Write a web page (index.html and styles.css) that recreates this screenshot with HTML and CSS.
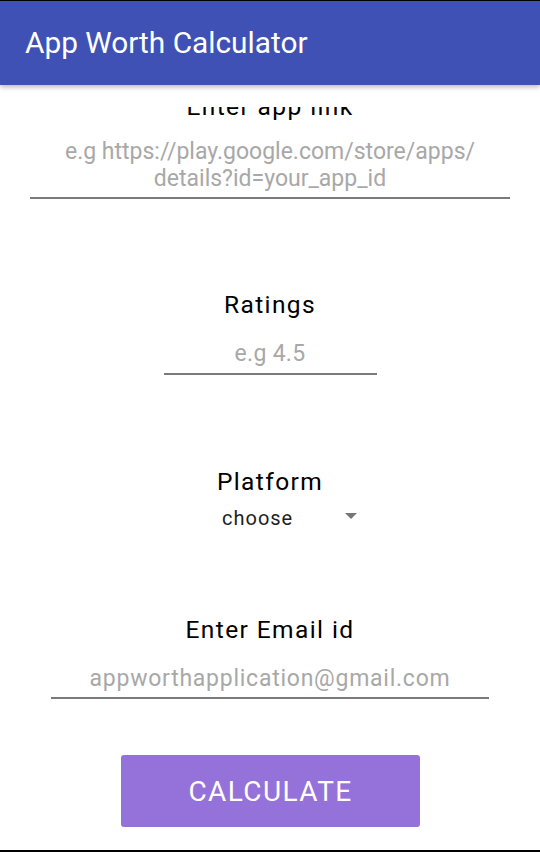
FILE: index.html
```html
<!DOCTYPE html>
<html>
<head>
<meta charset="utf-8">
<link rel="stylesheet" href="styles.css">
</head>
<body>
<div class="screen">
  <header class="appbar"><span class="title">App Worth Calculator</span></header>
  <main class="scroll">
    <div class="clip">
      <div class="label first">Enter app link</div>
      <div class="field link"><span class="hint">e.g https://play.google.com/store/apps/<br>details?id=your_app_id</span></div>
      <div class="label ratings">Ratings</div>
      <div class="field rating"><span class="hint">e.g 4.5</span></div>
      <div class="label platform">Platform</div>
      <div class="spinner"><span class="choose">choose</span><span class="arrow"></span></div>
      <div class="label email">Enter Email id</div>
      <div class="field mail"><span class="hint">appworthapplication@gmail.com</span></div>
      <button class="calc">CALCULATE</button>
    </div>
  </main>
</div>
</body>
</html>
```
FILE: styles.css
```css
html, body {
  margin: 0;
  padding: 0;
  background: #fff;
}
.screen {
  width: 540px;
  height: 852px;
  box-sizing: border-box;
  border-top: 1px solid #000;
  border-bottom: 2px solid #000;
  display: flex;
  flex-direction: column;
  font-family: Roboto, "Noto Sans", sans-serif;
  overflow: hidden;
}
.appbar {
  height: 84px;
  flex: none;
  background: #3f51b5;
  display: flex;
  align-items: center;
  padding-left: 25px;
  box-shadow: 0 2px 5px rgba(0,0,0,0.28);
  position: relative;
  z-index: 2;
}
.title {
  color: #fff;
  font-size: 29.8px;
  line-height: 32px;
}
.scroll {
  flex: 1;
  padding-top: 22px;
  display: flex;
  flex-direction: column;
}
.clip {
  flex: 1;
  overflow: hidden;
  display: flex;
  flex-direction: column;
  align-items: center;
}
.label {
  font-size: 24.5px;
  line-height: 28px;
  letter-spacing: 1.4px;
  color: #000;
  text-align: center;
}
.first { margin-top: -14px; }
.field {
  border-bottom: 2px solid #7a7a7a;
  text-align: center;
  box-sizing: border-box;
  font-size: 23px;
}
.hint {
  color: #a8a8a8;
}
.link {
  width: 480px;
  margin-top: 17px;
  padding-bottom: 5px;
  line-height: 27px;
  letter-spacing: 0;
}
.ratings { margin-top: 92px; }
.rating {
  width: 213px;
  margin-top: 21px;
  padding-bottom: 5px;
  line-height: 28px;
  letter-spacing: 0.3px;
}
.platform { margin-top: 93px; }
.spinner {
  margin-top: 10px;
  padding-left: 39px;
  width: 135px;
  display: flex;
  align-items: center;
  justify-content: space-between;
}
.choose {
  font-size: 20px;
  line-height: 24px;
  letter-spacing: 1px;
  color: #1e1e1e;
}
.arrow {
  width: 0;
  height: 0;
  border-left: 6px solid transparent;
  border-right: 6px solid transparent;
  border-top: 6px solid #777;
  margin-top: -4px;
}
.email { margin-top: 86px; }
.mail {
  width: 438px;
  margin-top: 21px;
  padding-bottom: 4px;
  line-height: 28px;
  letter-spacing: 0.75px;
}
.calc {
  margin-top: 56px;
  width: 299px;
  height: 72px;
  border: none;
  border-radius: 3px;
  background: #9571da;
  color: #fff;
  font-family: Roboto, "Noto Sans", sans-serif;
  font-size: 28px;
  letter-spacing: 1.4px;
  padding: 0 0 0 1px;
  flex: none;
}
```
